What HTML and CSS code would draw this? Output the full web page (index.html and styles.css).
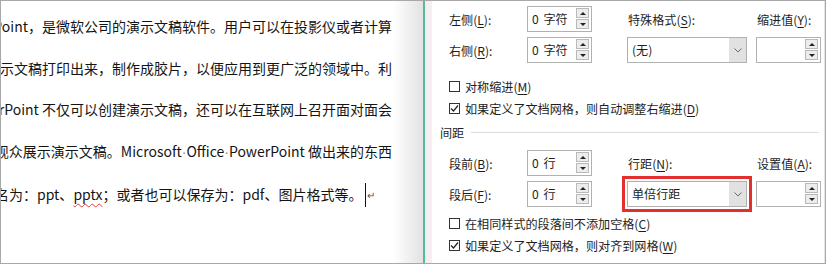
FILE: index.html
```html
<!DOCTYPE html>
<html lang="zh-CN">
<head>
  <meta charset="UTF-8" />
  <title>段落</title>
  <link rel="stylesheet" href="styles.css">
</head>
<body>
  <div class="frame">
    <div class="doc">
      <div class="doc-lines">
        <div class="ln"><span>PowerPoint，是微软公司的演示文稿软件。用户可以在投影仪或者计算</span></div>
        <div class="ln"><span>将演示文稿打印出来，制作成胶片，以便应用到更广泛的领域中。利</span></div>
        <div class="ln"><span>PowerPoint 不仅可以创建演示文稿，还可以在互联网上召开面对面会</span></div>
        <div class="ln"><span>给观众展示演示文稿。Microsoft<i class="sp">·</i>Office<i class="sp">·</i>PowerPoint 做出来的东西</span></div>
        <div class="ln last"><span>名为：ppt、<u class="typo">pptx</u>；或者也可以保存为：pdf、图片格式等。</span><span class="caret"></span><span class="pmark">↵</span></div>
      </div>
    </div>
    <div class="edge"></div>
    <div class="dlg">
      <div class="grid">
        <div class="lbl"><span>左侧(<u>L</u>):</span></div>
        <div class="spin"><span>0 字符</span><div class="arrows"><i class="up"></i><i class="dn"></i></div></div>
        <div class="lbl"><span>特殊格式(<u>S</u>):</span></div>
        <div class="lbl"><span>缩进值(<u>Y</u>):</span></div>
        <div class="lbl"><span>右侧(<u>R</u>):</span></div>
        <div class="spin"><span>0 字符</span><div class="arrows"><i class="up"></i><i class="dn"></i></div></div>
        <div class="combo"><span>(无)</span><b class="drop"><svg width="8" height="5" viewBox="0 0 8 5"><polyline points="0.5,0.5 4,4 7.5,0.5" fill="none" stroke="#6a6a6a" stroke-width="1"/></svg></b></div>
        <div class="spin"><span></span><div class="arrows"><i class="up"></i><i class="dn"></i></div></div>
      </div>
      <div class="chk first"><span class="box"></span><span>对称缩进(<u>M</u>)</span></div>
      <div class="chk"><span class="box"><svg width="9" height="9" viewBox="0 0 9 9"><polyline points="1,4.5 3.5,7 8,1.5" fill="none" stroke="#222" stroke-width="1.2"/></svg></span><span>如果定义了文档网格，则自动调整右缩进(<u>D</u>)</span></div>

      <div class="sect"><span>间距</span><i></i></div>

      <div class="grid second">
        <div class="lbl"><span>段前(<u>B</u>):</span></div>
        <div class="spin"><span>0 行</span><div class="arrows"><i class="up"></i><i class="dn"></i></div></div>
        <div class="lbl"><span>行距(<u>N</u>):</span></div>
        <div class="lbl"><span>设置值(<u>A</u>):</span></div>
        <div class="lbl"><span>段后(<u>F</u>):</span></div>
        <div class="spin"><span>0 行</span><div class="arrows"><i class="up"></i><i class="dn"></i></div></div>
        <div class="combo marked"><span>单倍行距</span><b class="drop"><svg width="8" height="5" viewBox="0 0 8 5"><polyline points="0.5,0.5 4,4 7.5,0.5" fill="none" stroke="#6a6a6a" stroke-width="1"/></svg></b></div>
        <div class="spin"><span></span><div class="arrows"><i class="up"></i><i class="dn"></i></div></div>
      </div>
      <div class="chk third"><span class="box"></span><span>在相同样式的段落间不添加空格(<u>C</u>)</span></div>
      <div class="chk"><span class="box"><svg width="9" height="9" viewBox="0 0 9 9"><polyline points="1,4.5 3.5,7 8,1.5" fill="none" stroke="#222" stroke-width="1.2"/></svg></span><span>如果定义了文档网格，则对齐到网格(<u>W</u>)</span></div>
    </div>
  </div>
</body>
</html>
```

FILE: styles.css
```css
body {
  margin: 0;
  background: #fff;
  font-family: "Noto Sans CJK SC", sans-serif;
  text-autospace: no-autospace;
}
.frame {
  width: 826px;
  height: 264px;
  box-sizing: border-box;
  border: 1px solid #a8a8a8;
  display: flex;
  overflow: hidden;
}
.doc {
  width: 422px;
  flex: none;
  overflow: hidden;
  background: linear-gradient(to right, #fff 0, #fff 392px, #e2e2e2 422px);
}
.doc-lines {
  padding: 5px 31px 0 0;
  font-size: 14px;
  line-height: 41.7px;
  color: #141414;
}
.ln {
  display: flex;
  justify-content: flex-end;
  white-space: nowrap;
}
.ln.last {
  justify-content: flex-start;
  align-items: center;
  margin-left: -6px;
}
.sp {
  font-style: normal;
  font-family: "Liberation Sans", sans-serif;
  color: #8a8a8a;
}
.typo {
  text-decoration: underline wavy #e23b3b;
  text-decoration-thickness: 1px;
  text-underline-offset: 3px;
}
.caret {
  width: 1px;
  height: 24px;
  background: #111;
  margin-left: 3px;
}
.pmark {
  font-size: 10px;
  color: #555;
  margin-left: 1px;
  line-height: 1;
}
.edge {
  width: 7px;
  flex: none;
  border-left: 2px solid #55b99f;
  background: #f5eff1;
}
.dlg {
  flex: 1;
  padding: 5px 0 0 8px;
  font-size: 12.1px;
  color: #1e1e1e;
  border-right: 1px solid #e6e6e6;
}
.grid {
  display: grid;
  grid-template-columns: 78px 65px 155px 74px;
  grid-template-rows: 26px 26px;
  row-gap: 5px;
  margin-left: 9px;
}
.grid .lbl:nth-child(3) {
  margin-left: 35px;
  padding-left: 1px;
}
.grid .lbl:nth-child(4) {
  margin-left: 9px;
  padding-left: 1px;
}
.grid .combo {
  margin-left: 35px;
}
.grid .spin:last-child {
  margin-left: 9px;
}
.grid.second {
  margin-top: 7px;
}
.lbl {
  display: flex;
  align-items: center;
  white-space: nowrap;
}
u {
  text-underline-offset: 2px;
}
.spin {
  box-sizing: border-box;
  border: 1px solid #b1b1b1;
  display: flex;
  justify-content: space-between;
  padding: 1px 2px 0 4px;
  background: #fff;
}
.spin span {
  line-height: 22px;
  word-spacing: 2px;
}
.arrows {
  display: flex;
  flex-direction: column;
  gap: 1px;
}
.arrows i {
  width: 13px;
  height: 10px;
  box-sizing: border-box;
  border: 1px solid #b9b9b9;
  background: #ececec;
  display: flex;
  align-items: center;
  justify-content: center;
}
.arrows i::after {
  content: "";
  border-left: 3px solid transparent;
  border-right: 3px solid transparent;
}
.arrows .up::after {
  border-bottom: 3px solid #222;
}
.arrows .dn::after {
  border-top: 3px solid #222;
}
.combo {
  box-sizing: border-box;
  border: 1px solid #b1b1b1;
  display: flex;
  justify-content: space-between;
  background: #fff;
}
.combo span {
  padding-left: 4px;
  line-height: 24px;
}
.drop {
  width: 17px;
  background: #e1e1e1;
  display: flex;
  align-items: center;
  justify-content: center;
}
.combo.marked {
  outline: 3px solid #e3302e;
  outline-offset: 2px;
}
.chk {
  height: 22px;
  display: flex;
  align-items: center;
  gap: 5px;
  margin-left: 9px;
  white-space: nowrap;
}
.chk.first {
  margin-top: 12px;
}
.chk.third {
  margin-top: 5px;
}
.box {
  width: 11px;
  height: 11px;
  box-sizing: border-box;
  border: 1px solid #333;
  display: flex;
  align-items: center;
  justify-content: center;
  background: #fff;
}
.sect {
  height: 22px;
  margin-top: 2px;
  display: flex;
  align-items: center;
  gap: 7px;
  padding-right: 5px;
}
.sect i {
  flex: 1;
  height: 1px;
  background: #dcdcdc;
}
```
